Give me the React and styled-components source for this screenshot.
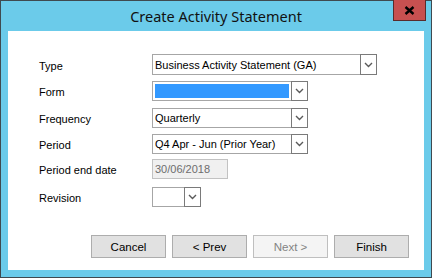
import React from "react";
import styled, { createGlobalStyle } from "styled-components";

const Global = createGlobalStyle`
  html, body {
    margin: 0;
    padding: 0;
    background: #ffffff;
  }
  body {
    font-family: "Liberation Sans", Arial, sans-serif;
    font-size: 11px;
    color: #000;
  }
`;

const Window = styled.div`
  width: 432px;
  height: 278px;
  box-sizing: border-box;
  border: 1px solid #3f4a50;
  background: #6bcbea;
  display: flex;
  flex-direction: column;
`;

const TitleBar = styled.div`
  height: 30px;
  display: flex;
  align-items: flex-start;
  justify-content: center;
  position: relative;
`;

const Title = styled.div`
  font-family: "Segoe UI", "Noto Sans", sans-serif;
  font-size: 14.5px;
  line-height: 16px;
  margin-top: 7px;
  color: #111;
`;

const CloseButton = styled.div`
  position: absolute;
  top: -1px;
  right: 5px;
  width: 33px;
  height: 21px;
  box-sizing: border-box;
  background: #c75050;
  border: 1px solid #5a2b2b;
  border-top: none;
  display: flex;
  align-items: center;
  justify-content: center;
`;

const Client = styled.div`
  flex: 1;
  margin: 0 7px 7px 7px;
  background: #ffffff;
  display: flex;
  flex-direction: column;
  padding: 23px 15px 0 31px;
`;

const Form = styled.div`
  display: flex;
  flex-direction: column;
`;

const Row = styled.div`
  display: flex;
  align-items: center;
  height: ${p => p.h || 20}px;
  margin-top: ${p => p.mt || 0}px;
`;

const Label = styled.div`
  width: 113px;
  flex: none;
  padding-top: 2px;
`;

const Combo = styled.div`
  width: ${p => p.w}px;
  height: ${p => p.h || 20}px;
  box-sizing: border-box;
  border: 1px solid #a6a6a6;
  display: flex;
  align-items: stretch;
  background: #fff;
`;

const Value = styled.div`
  flex: 1;
  padding-left: 2px;
  display: flex;
  align-items: center;
  white-space: nowrap;
  overflow: hidden;
`;

const Highlight = styled.div`
  flex: 1;
  margin: 2px;
  background: #3399ff;
`;

const Arrow = styled.div`
  width: 17px;
  flex: none;
  box-sizing: border-box;
  margin: -1px -1px -1px 0;
  border: 1px solid #7a7a7a;
  background: #fff;
  display: flex;
  align-items: center;
  justify-content: center;
`;

const TextBox = styled.div`
  width: 76px;
  height: 20px;
  box-sizing: border-box;
  border: 1px solid #c2c2c2;
  background: #f0f0f0;
  color: #6d6d6d;
  padding-left: 2px;
  display: flex;
  align-items: center;
`;

const Buttons = styled.div`
  margin-top: auto;
  margin-bottom: 12px;
  display: flex;
  justify-content: flex-end;
  gap: 6px;
`;

const Button = styled.div`
  width: 75px;
  height: 23px;
  box-sizing: border-box;
  border: 1px solid ${p => (p.disabled ? "#bfbfbf" : "#adadad")};
  background: ${p => (p.disabled ? "#f4f4f4" : "#e1e1e1")};
  color: ${p => (p.disabled ? "#838383" : "#000")};
  display: flex;
  align-items: center;
  justify-content: center;
  font-size: 11.5px;
`;

const Chevron = () => (
  <svg width="9" height="6" viewBox="0 0 9 6">
    <path d="M1 1 L4.5 4.5 L8 1" fill="none" stroke="#5a5a5a" strokeWidth="1.4" />
  </svg>
);

const ComboBox = ({ w, h, children }) => (
  <Combo w={w} h={h}>
    {children || <Value />}
    <Arrow>
      <Chevron />
    </Arrow>
  </Combo>
);

export default function App() {
  return (
    <>
      <Global />
      <Window>
        <TitleBar>
          <Title>Create Activity Statement</Title>
          <CloseButton>
            <svg width="11" height="9" viewBox="0 0 11 9">
              <path d="M1.5 1 L9.5 8 M9.5 1 L1.5 8" stroke="#000" strokeWidth="2.4" />
            </svg>
          </CloseButton>
        </TitleBar>
        <Client>
          <Form>
            <Row h={21}>
              <Label>Type</Label>
              <ComboBox w={225} h={21}>
                <Value>Business Activity Statement (GA)</Value>
              </ComboBox>
            </Row>
            <Row mt={6}>
              <Label>Form</Label>
              <ComboBox w={156}>
                <Highlight />
              </ComboBox>
            </Row>
            <Row mt={7}>
              <Label>Frequency</Label>
              <ComboBox w={156}>
                <Value>Quarterly</Value>
              </ComboBox>
            </Row>
            <Row mt={6}>
              <Label>Period</Label>
              <ComboBox w={156}>
                <Value>Q4 Apr - Jun (Prior Year)</Value>
              </ComboBox>
            </Row>
            <Row mt={5}>
              <Label>Period end date</Label>
              <TextBox>30/06/2018</TextBox>
            </Row>
            <Row mt={8}>
              <Label>Revision</Label>
              <ComboBox w={49} />
            </Row>
          </Form>
          <Buttons>
            <Button>Cancel</Button>
            <Button>&lt; Prev</Button>
            <Button disabled>Next &gt;</Button>
            <Button>Finish</Button>
          </Buttons>
        </Client>
      </Window>
    </>
  );
}
